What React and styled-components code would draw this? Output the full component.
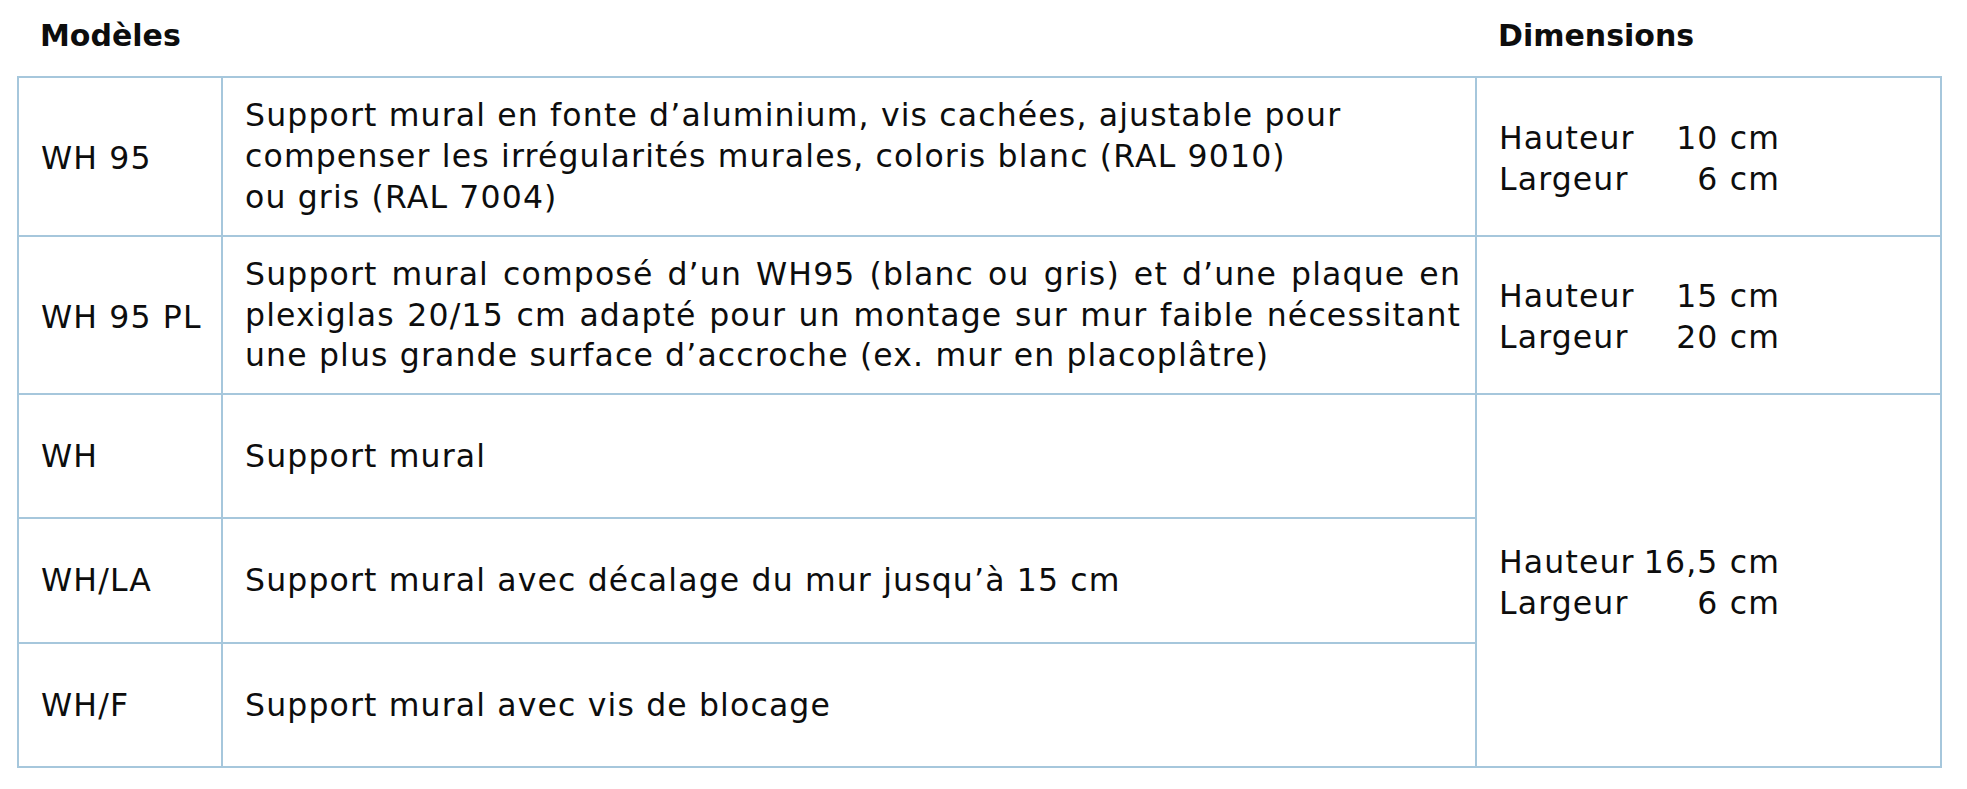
import React from "react";
import styled, { createGlobalStyle } from "styled-components";

const GlobalStyle = createGlobalStyle`
  html, body {
    margin: 0;
    padding: 0;
    background: #ffffff;
  }
`;

const Page = styled.div`
  padding-left: 17px;
  font-family: "DejaVu Sans", "Liberation Sans", sans-serif;
  color: #0d0d0d;
`;

const Table = styled.table`
  border-collapse: collapse;
  table-layout: fixed;
  width: 1923px;
`;

const Col = styled.col`
  width: ${(p) => p.$w}px;
`;

const HeadCell = styled.th`
  padding: 16px 0 20px 22px;
  text-align: left;
  vertical-align: top;
  font-size: 30px;
  font-weight: 700;
  line-height: 40px;
  border: none;
`;

const Row = styled.tr`
  height: ${(p) => p.$h}px;
`;

const Cell = styled.td`
  border: 2px solid #a6c7dc;
  padding: ${(p) => (p.$shift ? "4px 14px 0 22px" : "0 14px 0 22px")};
  vertical-align: middle;
  font-size: 31.5px;
  line-height: 40.7px;
  letter-spacing: 1.15px;
  font-weight: 400;
`;

const Line = styled.span`
  display: block;
  text-align: ${(p) => (p.$justify ? "justify" : "left")};
  text-align-last: ${(p) => (p.$justify ? "justify" : "auto")};
`;

const DimGrid = styled.div`
  display: grid;
  grid-template-columns: 140px 141px;
`;

const DimLabel = styled.span`
  text-align: left;
  white-space: nowrap;
`;

const DimValue = styled.span`
  text-align: right;
  white-space: nowrap;
`;

const Dimensions = ({ h, w }) => (
  <DimGrid>
    <DimLabel>Hauteur</DimLabel>
    <DimValue>{h}</DimValue>
    <DimLabel>Largeur</DimLabel>
    <DimValue>{w}</DimValue>
  </DimGrid>
);

export default function App() {
  return (
    <Page>
      <GlobalStyle />
      <Table>
        <colgroup>
          <Col $w={204} />
          <Col $w={1254} />
          <Col $w={465} />
        </colgroup>
        <thead>
          <tr>
            <HeadCell>Modèles</HeadCell>
            <HeadCell />
            <HeadCell>Dimensions</HeadCell>
          </tr>
        </thead>
        <tbody>
          <Row $h={159}>
            <Cell $shift>WH 95</Cell>
            <Cell>
              <Line>Support mural en fonte d’aluminium, vis cachées, ajustable pour</Line>
              <Line>compenser les irrégularités murales, coloris blanc (RAL 9010)</Line>
              <Line>ou gris (RAL 7004)</Line>
            </Cell>
            <Cell $shift>
              <Dimensions h="10 cm" w="6 cm" />
            </Cell>
          </Row>
          <Row $h={158}>
            <Cell $shift>WH 95 PL</Cell>
            <Cell>
              <Line $justify>
                Support mural composé d’un WH95 (blanc ou gris) et d’une plaque en
              </Line>
              <Line $justify>
                plexiglas 20/15 cm adapté pour un montage sur mur faible nécessitant
              </Line>
              <Line>une plus grande surface d’accroche (ex. mur en placoplâtre)</Line>
            </Cell>
            <Cell $shift>
              <Dimensions h="15 cm" w="20 cm" />
            </Cell>
          </Row>
          <Row $h={124}>
            <Cell>WH</Cell>
            <Cell>Support mural</Cell>
            <Cell rowSpan={3} $shift>
              <Dimensions h="16,5 cm" w="6 cm" />
            </Cell>
          </Row>
          <Row $h={125}>
            <Cell>WH/LA</Cell>
            <Cell>Support mural avec décalage du mur jusqu’à 15 cm</Cell>
          </Row>
          <Row $h={124}>
            <Cell>WH/F</Cell>
            <Cell>Support mural avec vis de blocage</Cell>
          </Row>
        </tbody>
      </Table>
    </Page>
  );
}
